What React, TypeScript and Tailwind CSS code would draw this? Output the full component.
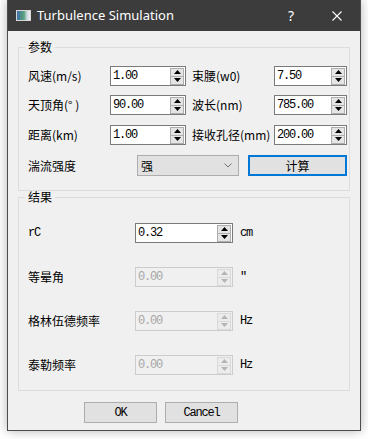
import clsx from "clsx";

const cjk = "font-['Noto_Sans_CJK_SC',sans-serif]";
const mono = "font-['Liberation_Mono',monospace]";

function Arrows({ disabled }: { disabled?: boolean }) {
  const tri = disabled ? "#b5b5b5" : "#000000";
  const box = disabled ? "border-[#d9d9d9] bg-[#ececec]" : "border-[#adadad] bg-[#e5e5e5]";
  return (
    <div className="mr-[1px] flex h-[17px] w-[14px] flex-col">
      <div className={clsx("flex flex-1 items-center justify-center border", box)}>
        <svg width="7" height="4" viewBox="0 0 7 4">
          <path d="M3.5 0 L7 4 L0 4 Z" fill={tri} />
        </svg>
      </div>
      <div className={clsx("-mt-px flex flex-1 items-center justify-center border", box)}>
        <svg width="7" height="4" viewBox="0 0 7 4">
          <path d="M0 0 L7 0 L3.5 4 Z" fill={tri} />
        </svg>
      </div>
    </div>
  );
}

function Spin({ value, className, disabled }: { value: string; className: string; disabled?: boolean }) {
  return (
    <div
      className={clsx(
        "flex h-[20px] shrink-0 items-center border",
        disabled ? "border-[#cccccc] bg-[#f0f0f0] text-[#a6a6a6]" : "border-[#7a7a7a] bg-white text-black",
        className
      )}
    >
      <span className={clsx("flex-1 pl-[2px] text-[12px] leading-none tracking-[-1.2px]", mono)}>{value}</span>
      <Arrows disabled={disabled} />
    </div>
  );
}

function Label({ text, className, latin }: { text: string; className: string; latin?: boolean }) {
  return (
    <div className={clsx("shrink-0 text-[12px] leading-none text-black", latin ? `${mono} tracking-[-1.2px]` : cjk, className)}>
      {text}
    </div>
  );
}

function Group({ title, className, children }: { title: string; className: string; children: React.ReactNode }) {
  return (
    <div className={clsx("relative mx-[10px] border border-[#dcdcdc]", className)}>
      <span className={clsx("absolute left-[6px] top-[-7px] bg-[#f0f0f0] px-[3px] text-[12px] leading-none text-black", cjk)}>
        {title}
      </span>
      {children}
    </div>
  );
}

function ResultRow({ label, value, unit, disabled, latin }: { label: string; value: string; unit: string; disabled?: boolean; latin?: boolean }) {
  return (
    <div className="flex h-[20px] items-center">
      <Label text={label} className="w-[107px]" latin={latin} />
      <Spin value={value} className="w-[98px]" disabled={disabled} />
      <span className={clsx("ml-[7px] text-[12px] leading-none tracking-[-1.2px] text-black", mono)}>{unit}</span>
    </div>
  );
}

export default function App() {
  return (
    <div className="h-[439px] w-[368px] overflow-hidden bg-white">
      <div className="ml-[7px] flex h-[431px] w-[354px] flex-col border-x border-b border-[#4d4d4d] bg-[#f0f0f0] shadow-[0_0_10px_rgba(0,0,0,0.3)]">
        {/* title bar */}
        <div className="flex h-[31px] shrink-0 items-center bg-[#3c3c3c] text-white">
          <div className="ml-[8px] h-[11px] w-[15px] border border-[#d8d8d8] bg-[linear-gradient(90deg,#3d6fa8_0%,#5aa47a_55%,#c9d6e0_75%,#f0f0f0_100%)]" />
          <span className="ml-[6px] font-['Noto_Sans',sans-serif] text-[13px] leading-none">Turbulence Simulation</span>
          <div className="ml-auto flex h-full">
            <div className="flex w-[46px] items-center justify-center font-['Noto_Sans',sans-serif] text-[14px]">?</div>
            <div className="flex w-[46px] items-center justify-center">
              <svg width="10" height="10" viewBox="0 0 10 10">
                <path d="M0.5 0.5 L9.5 9.5 M9.5 0.5 L0.5 9.5" stroke="#ffffff" strokeWidth="1.1" />
              </svg>
            </div>
          </div>
        </div>

        {/* 参数 */}
        <Group title="参数" className="mt-[16px] h-[144px] pl-[9px] pt-[18px]">
          <div className="flex h-[20px] items-center">
            <Label text="风速(m/s)" className="w-[82px]" />
            <Spin value="1.00" className="w-[76px]" />
            <Label text="束腰(w0)" className="ml-[6px] w-[82px]" />
            <Spin value="7.50" className="w-[73px]" />
          </div>
          <div className="mt-[9px] flex h-[20px] items-center">
            <Label text="天顶角(° )" className="w-[82px]" />
            <Spin value="90.00" className="w-[76px]" />
            <Label text="波长(nm)" className="ml-[6px] w-[82px]" />
            <Spin value="785.00" className="w-[73px]" />
          </div>
          <div className="mt-[10px] flex h-[20px] items-center">
            <Label text="距离(km)" className="w-[82px]" />
            <Spin value="1.00" className="w-[76px]" />
            <Label text="接收孔径(mm)" className="ml-[6px] w-[82px]" />
            <Spin value="200.00" className="w-[73px]" />
          </div>
          <div className="mt-[10px] flex h-[21px] items-center">
            <Label text="湍流强度" className="w-[109px]" />
            <div className="flex h-[21px] w-[102px] shrink-0 items-center border border-[#adadad] bg-[#e1e1e1] pl-[3px] pr-[6px]">
              <span className={clsx("flex-1 text-[12px] leading-none", cjk)}>强</span>
              <svg width="8" height="5" viewBox="0 0 8 5">
                <path d="M0.5 0.5 L4 4 L7.5 0.5" fill="none" stroke="#707070" strokeWidth="1" />
              </svg>
            </div>
            <div className={clsx("ml-[9px] flex h-[21px] w-[99px] shrink-0 items-center justify-center border-2 border-[#0078d7] bg-[#e1e1e1] text-[12px] leading-none", cjk)}>
              计算
            </div>
          </div>
        </Group>

        {/* 结果 */}
        <Group title="结果" className="mt-[6px] flex h-[194px] flex-col gap-[24px] pl-[9px] pt-[25px]">
          <ResultRow label="rC" value="0.32" unit="cm" latin />
          <ResultRow label="等晕角" value="0.00" unit="″" disabled />
          <ResultRow label="格林伍德频率" value="0.00" unit="Hz" disabled />
          <ResultRow label="泰勒频率" value="0.00" unit="Hz" disabled />
        </Group>

        {/* buttons */}
        <div className="mt-[11px] flex gap-[8px] pl-[76px]">
          <div className={clsx("flex h-[21px] w-[73px] items-center justify-center border border-[#adadad] bg-[#e1e1e1] text-[12px] leading-none tracking-[-1.2px]", mono)}>
            OK
          </div>
          <div className={clsx("flex h-[21px] w-[73px] items-center justify-center border border-[#adadad] bg-[#e1e1e1] text-[12px] leading-none tracking-[-1.2px]", mono)}>
            Cancel
          </div>
        </div>
      </div>
    </div>
  );
}
